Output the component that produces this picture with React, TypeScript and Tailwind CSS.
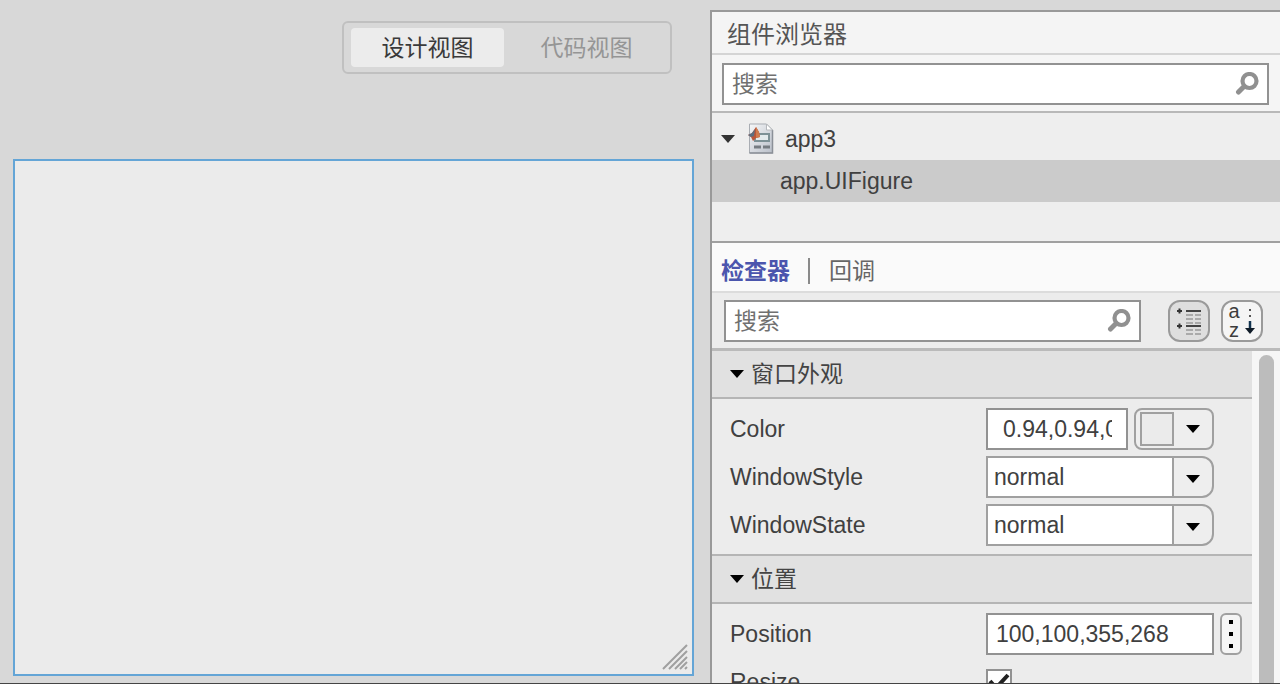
import { useState, type ReactNode } from 'react';

function Caret({ className = '' }: { className?: string }) {
    return (
        <svg viewBox="0 0 14 8" className={`h-2 w-3.5 shrink-0 ${className}`} fill="currentColor" aria-hidden="true">
            <path d="M0 0h14L7 8z" />
        </svg>
    );
}

function SearchIcon() {
    return (
        <svg viewBox="0 0 24 24" className="h-6 w-6 shrink-0 text-[#909090]" fill="none" stroke="currentColor" aria-hidden="true">
            <circle cx="14.5" cy="9" r="7" strokeWidth="4.200" />
            <path d="M9 14.500l-5.500 5.500" strokeWidth="5" strokeLinecap="round" />
        </svg>
    );
}

function AppFileIcon() {
    return (
        <svg viewBox="0 0 28 31" className="h-[31px] w-7 shrink-0" aria-hidden="true">
            <defs>
                <linearGradient id="sheet" x1="0" y1="0" x2="1" y2="1">
                    <stop offset="0" stopColor="#f6f7f8" />
                    <stop offset="1" stopColor="#b9bfc9" />
                </linearGradient>
            </defs>
            <path d="M2.500 1h17l6 6v23h-23z" fill="url(#sheet)" stroke="#a9adb3" />
            <path d="M25.500 7v23h-23" fill="none" stroke="#8b9098" strokeWidth="1.500" />
            <path d="M19.500 1v6h6z" fill="#fff" stroke="#b5b8bc" />
            <rect x="8" y="11" width="14" height="7" fill="#e3eaec" stroke="#7d9196" strokeWidth="2" />
            <path d="M7 24h7M16 24h7" stroke="#767c82" strokeWidth="3" />
            <path d="M1 12l4-2 4-6 3 5 1 5-4 1-3 3-2-4z" fill="#b9563a" />
            <path d="M1 12l4-2 3-4-1 7-3 1z" fill="#5b6f82" />
            <path d="M9 4l3 5 1 5-4 1z" fill="#cf7a4d" />
        </svg>
    );
}

function SearchBox({ label, className }: { label: string; className: string }) {
    return (
        <label className={`flex h-[42px] items-center border-2 border-[#929292] bg-white pr-2 pl-2 ${className}`}>
            <input
                type="text"
                aria-label={label}
                placeholder="搜索"
                className="min-w-0 flex-1 bg-transparent outline-none placeholder:text-[#707070]"
            />
            <SearchIcon />
        </label>
    );
}

function Section({ title, children }: { title: string; children: ReactNode }) {
    const [open, setOpen] = useState(true);

    return (
        <section className="border-t-2 border-[#b5b5b5] first:border-t-0">
            <h3>
                <button
                    type="button"
                    aria-expanded={open}
                    onClick={() => setOpen(!open)}
                    className="flex h-12 w-full items-center gap-[7px] border-b-2 border-[#b5b5b5] bg-[#e1e1e1] pl-[18px] text-[#444]"
                >
                    <Caret className="text-black" />
                    {title}
                </button>
            </h3>
            {open && <div className="flex flex-col gap-1.5 pt-[9px] pb-2 pl-[18px]">{children}</div>}
        </section>
    );
}

function Row({ label, htmlFor, children }: { label: string; htmlFor: string; children: ReactNode }) {
    return (
        <div className="flex h-[42px] shrink-0 items-center">
            <label htmlFor={htmlFor} className="w-64 shrink-0">
                {label}
            </label>
            {children}
        </div>
    );
}

function Dropdown({ id, options }: { id: string; options: string[] }) {
    return (
        <div className="relative flex h-[42px] w-[228px] rounded-r-xl border-2 border-[#a0a0a0] bg-[#eee]">
            <select id={id} className="w-full appearance-none bg-transparent bg-linear-to-r from-white from-[184px] to-transparent to-[184px] pl-1.5 outline-none">
                {options.map((option) => (
                    <option key={option}>{option}</option>
                ))}
            </select>
            <span className="pointer-events-none absolute inset-y-0 right-0 flex w-10 items-center justify-center border-l-2 border-[#a0a0a0]">
                <Caret className="mt-1 text-black" />
            </span>
        </div>
    );
}

function Canvas() {
    return (
        <main className="flex min-w-0 flex-1 flex-col pt-[21px] pr-4 pb-[7px] pl-[13px]">
            <div className="mr-[22px] flex h-[53px] self-end rounded-md border-2 border-[#c0c0c0] p-[5px] pl-[7px]">
                <button type="button" className="w-[153px] rounded bg-[#ececec] text-[#3a3a3a]">
                    设计视图
                </button>
                <button type="button" className="w-[161px] pl-1 text-[#959595]">
                    代码视图
                </button>
            </div>
            <div className="mt-[85px] flex flex-1 items-end justify-end border-2 border-[#64a5d6] bg-[#ebebeb] p-1">
                <svg viewBox="0 0 26 26" className="h-[26px] w-[26px]" stroke="#a0a0a0" strokeWidth="2" aria-hidden="true">
                    <path d="M1 25L25 1M7 25L25 7M13 25l12-12M18 25l7-7M23 25l2-2" />
                </svg>
            </div>
        </main>
    );
}

function ComponentBrowser() {
    return (
        <section>
            <h2 className="h-[43px] border-b-2 border-[#d4d4d4] bg-[#f4f4f4] pl-[15px] text-2xl leading-[46px] text-[#555]">
                组件浏览器
            </h2>
            <div className="border-b-2 border-[#b8b8b8] bg-[#f5f5f5] pt-2 pr-[11px] pb-1.5 pl-2.5">
                <SearchBox label="搜索组件" className="w-full" />
            </div>
            <ul className="h-32 bg-[#eee]">
                <li>
                    <div className="flex h-[47px] items-center pt-1 pl-[9px]">
                        <Caret className="text-[#333]" />
                        <span className="mr-2.5 ml-3">
                            <AppFileIcon />
                        </span>
                        app3
                    </div>
                    <ul>
                        <li className="h-[42px] bg-[#cbcbcb] pl-[68px] leading-[42px]">app.UIFigure</li>
                    </ul>
                </li>
            </ul>
        </section>
    );
}

function Inspector() {
    return (
        <section className="flex min-h-0 flex-1 flex-col border-t-2 border-[#a0a0a0]">
            <div className="flex h-[50px] shrink-0 items-center border-b-2 border-[#dcdcdc] bg-[#fafafa] pt-2 pl-[9px]">
                <button type="button" className="font-bold text-[#4b55ad]">
                    检查器
                </button>
                <span className="mr-[19px] ml-[18px] h-[26px] w-0.5 bg-[#8a8a8a]" />
                <button type="button" className="text-[#666]">
                    回调
                </button>
            </div>
            <div className="flex h-[58px] shrink-0 items-center border-b-3 border-[#bababa] pr-[17px] pl-3">
                <SearchBox label="搜索属性" className="mr-[27px] min-w-0 flex-1" />
                <button
                    type="button"
                    aria-label="按类别"
                    className="mr-[11px] flex h-[42px] w-[42px] items-center justify-center rounded-xl border-2 border-[#9a9a9a] bg-[#dedede]"
                >
                    <svg viewBox="0 0 28 28" className="h-7 w-7" fill="none">
                        <path d="M2 4h5M4.500 1.500v5M2 19h5M4.500 16.500v5" stroke="#333" strokeWidth="2" />
                        <path d="M11 4h15M11 19h15" stroke="#444" strokeWidth="2" />
                        <path
                            d="M11 8h7M20 8h6M11 12h7M20 12h6M11 16h7M20 16h6M11 23h7M20 23h6M11 27h7M20 27h6"
                            stroke="#999"
                            strokeWidth="1.500"
                        />
                    </svg>
                </button>
                <button
                    type="button"
                    aria-label="按字母顺序"
                    className="flex h-[42px] w-[42px] items-center justify-center gap-1 rounded-xl border-2 border-[#9a9a9a] bg-[#f5f5f5]"
                >
                    <span className="w-3 text-xl leading-[19px] text-[#3c3c3c]">a z</span>
                    <svg viewBox="0 0 12 30" className="h-[30px] w-3" fill="none">
                        <path d="M6 3v2M6 9v2" stroke="#555" strokeWidth="2" />
                        <path d="M6 15v10" stroke="#123450" strokeWidth="2.500" />
                        <path d="M1 22h10l-5 6z" fill="#101c28" />
                    </svg>
                </button>
            </div>
            <div className="flex min-h-0 flex-1">
                <div className="min-w-0 flex-1 overflow-hidden">
                    <Section title="窗口外观">
                        <Row label="Color" htmlFor="color">
                            <div className="mr-1.5 h-[42px] w-[142px] border-2 border-[#929292] bg-white pr-3.5 pl-[15px]">
                                <input id="color" type="text" defaultValue="0.94,0.94,0.94" className="h-full w-full bg-transparent outline-none" />
                            </div>
                            <button
                                type="button"
                                aria-label="选择颜色"
                                className="flex h-[42px] w-20 items-center gap-3 rounded-lg border-2 border-[#a0a0a0] bg-[#eee] pl-1"
                            >
                                <span className="h-[34px] w-[34px] border-2 border-[#a0a0a0] bg-[#ebebeb]" />
                                <Caret className="text-black" />
                            </button>
                        </Row>
                        <Row label="WindowStyle" htmlFor="window-style">
                            <Dropdown id="window-style" options={['normal', 'modal', 'alwaysontop']} />
                        </Row>
                        <Row label="WindowState" htmlFor="window-state">
                            <Dropdown id="window-state" options={['normal', 'minimized', 'maximized', 'fullscreen']} />
                        </Row>
                    </Section>
                    <Section title="位置">
                        <Row label="Position" htmlFor="position">
                            <input
                                id="position"
                                type="text"
                                defaultValue="100,100,355,268"
                                className="mr-1.5 h-[42px] w-[228px] border-2 border-[#929292] bg-white px-2 outline-none"
                            />
                            <button
                                type="button"
                                aria-label="更多"
                                className="flex h-[42px] w-[22px] flex-col items-center justify-center gap-2 rounded-md border-2 border-[#a0a0a0] bg-[#f5f5f5]"
                            >
                                <span className="h-1 w-1 bg-black" />
                                <span className="h-1 w-1 bg-black" />
                                <span className="h-1 w-1 bg-black" />
                            </button>
                        </Row>
                        <Row label="Resize" htmlFor="resize">
                            <span className="relative flex h-[26px] w-[26px]">
                                <input
                                    id="resize"
                                    type="checkbox"
                                    defaultChecked
                                    className="peer h-full w-full appearance-none border-2 border-[#929292] bg-white"
                                />
                                <svg
                                    viewBox="0 0 26 26"
                                    className="pointer-events-none absolute inset-0 hidden h-full w-full peer-checked:block"
                                    fill="none"
                                    stroke="#222"
                                    strokeWidth="4"
                                >
                                    <path d="M4 12l6 7L22 6" />
                                </svg>
                            </span>
                        </Row>
                    </Section>
                </div>
                {/* Scrollbar */}
                <div className="w-7 shrink-0 bg-[#f6f6f6] pt-1 pl-[7px]">
                    <div className="h-full w-[15px] rounded-t-full bg-[#bcbcbc]" />
                </div>
            </div>
        </section>
    );
}

export default function App() {
    return (
        <div className="flex h-screen overflow-hidden border-b border-[#444] bg-[#d8d8d8] font-['Liberation_Sans','Noto_Sans_CJK_SC',sans-serif] text-[23px] leading-7 text-[#404040]">
            <Canvas />
            <aside className="mt-2.5 flex w-[570px] shrink-0 flex-col border-t-2 border-l-2 border-[#999] bg-[#ececec]">
                <ComponentBrowser />
                <Inspector />
            </aside>
        </div>
    );
}
